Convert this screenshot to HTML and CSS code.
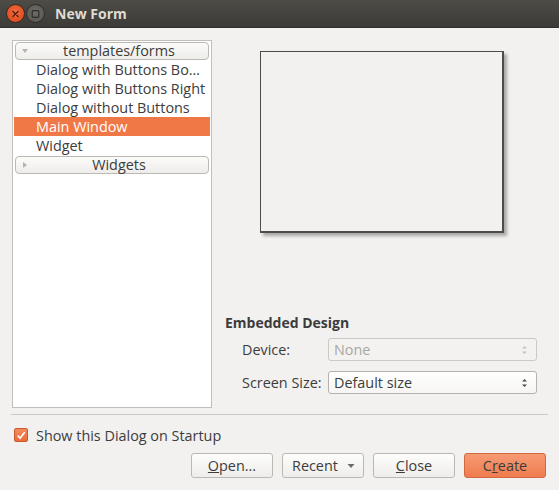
FILE: index.html
```html
<!DOCTYPE html>
<html>
<head>
<meta charset="utf-8">
<link rel="stylesheet" href="styles.css">
</head>
<body>
<div class="window">
  <div class="titlebar">
    <span class="tb-btn tb-close"><svg width="18" height="18" viewBox="0 0 18 18"><path d="M6.2 6.2 L11.8 11.8 M11.8 6.2 L6.2 11.8" stroke="#3a1a10" stroke-width="1.3" stroke-linecap="round"/></svg></span>
    <span class="tb-btn tb-min"><svg width="18" height="18" viewBox="0 0 18 18"><rect x="5.5" y="5.5" width="7" height="7" rx="1" fill="none" stroke="#2e2e2c" stroke-width="1.3"/></svg></span>
    <span class="title">New Form</span>
  </div>
  <div class="main">
    <div class="tree">
      <div class="group"><span class="arrow"><svg width="8" height="8" viewBox="0 0 8 8"><path d="M1 2 L7 2 L4 6 Z" fill="#b5b3ae"/></svg></span><span class="gtext">templates/forms</span></div>
      <div class="item">Dialog with Buttons Bo…</div>
      <div class="item">Dialog with Buttons Right</div>
      <div class="item">Dialog without Buttons</div>
      <div class="item selected">Main Window</div>
      <div class="item">Widget</div>
      <div class="group"><span class="arrow"><svg width="8" height="8" viewBox="0 0 8 8"><path d="M2 1 L6 4 L2 7 Z" fill="#b5b3ae"/></svg></span><span class="gtext">Widgets</span></div>
    </div>
    <div class="right">
      <div class="preview-wrap"><div class="preview"></div></div>
      <div class="embedded">
        <div class="ed-title">Embedded Design</div>
        <div class="ed-grid">
          <span class="lbl">Device:</span>
          <div class="combo disabled"><span>None</span><span class="spin"><svg width="7" height="12" viewBox="0 0 7 12"><path d="M1 4.5 L3.5 2 L6 4.5 Z M1 7.5 L3.5 10 L6 7.5 Z" fill="#c4c2bd"/></svg></span></div>
          <span class="lbl">Screen Size:</span>
          <div class="combo"><span>Default size</span><span class="spin"><svg width="7" height="12" viewBox="0 0 7 12"><path d="M1 4.5 L3.5 2 L6 4.5 Z M1 7.5 L3.5 10 L6 7.5 Z" fill="#4c4c4c"/></svg></span></div>
        </div>
      </div>
    </div>
  </div>
  <div class="sep"></div>
  <label class="check-row"><span class="checkbox"><svg width="13" height="13" viewBox="0 0 13 13"><path d="M3 6.5 L5.5 9.5 L10.5 3" fill="none" stroke="#fff" stroke-width="1.8"/></svg></span><span>Show this Dialog on Startup</span></label>
  <div class="buttons">
    <button class="btn"><u>O</u>pen...</button>
    <button class="btn recent"><span>Recent</span><svg width="8" height="6" viewBox="0 0 8 6"><path d="M0.5 1 L7.5 1 L4 5 Z" fill="#6a6a6a"/></svg></button>
    <button class="btn"><u>C</u>lose</button>
    <button class="btn primary">C<u>r</u>eate</button>
  </div>
</div>
</body>
</html>
```
FILE: styles.css
```css
* { box-sizing: border-box; }
html, body { margin: 0; padding: 0; }
body {
  width: 559px; height: 490px; overflow: hidden;
  background: #f2f1f0;
  font-family: "Open Sans", "DejaVu Sans", sans-serif;
  font-size: 14.4px;
  color: #3c3c3c;
}
.window { width: 559px; height: 490px; display: flex; flex-direction: column; }
.titlebar {
  height: 28px; flex: none;
  background: linear-gradient(#4d4c47, #3c3b37);
  display: flex; align-items: center;
  padding-left: 6px; gap: 1px;
  border-bottom: 1px solid #2f2e2b;
}
.tb-btn { width: 19px; height: 19px; border-radius: 50%; display: flex; align-items: center; justify-content: center; }
.tb-close { background: radial-gradient(circle at 50% 40%, #f4683c, #d8451b); border: 1px solid #3a2a22; }
.tb-min { background: radial-gradient(circle at 50% 40%, #6d6c67, #55544f); border: 1px solid #2e2d2a; }
.title { margin-left: 9px; color: #dfdbd2; font-weight: bold; font-size: 14px; }
.main { display: flex; padding: 12px 0 0 12px; height: 380px; flex: none; }
.tree {
  width: 200px; height: 368px;
  background: #fff; border: 1px solid #c2bfba;
  padding: 1px 2px 0 1px;
}
.group {
  height: 18px; margin: 0 0 0 1px;
  border: 1px solid #bcb9b3; border-radius: 4px;
  background: linear-gradient(#fbfbfa, #eeedeb);
  display: flex; align-items: center; position: relative;
}
.group .arrow { position: absolute; left: 5px; top: 4px; line-height: 0; }
.group .gtext { flex: 1; text-align: center; line-height: 16px; padding-left: 14px; }
.group:last-child { margin-top: 1px; }
.item { height: 19px; line-height: 19px; padding-left: 22px; white-space: nowrap; overflow: hidden; }
.item.selected { background: #f07746; color: #fff; margin-right: -1px; }
.right { flex: 1; display: flex; flex-direction: column; }
.preview-wrap { padding: 11px 0 0 48px; height: 273px; }
.preview {
  width: 244px; height: 182px;
  border: 2px solid #4c4c4c; border-width: 1px 2px 2px 1px;
  background: #f2f1f0;
  box-shadow: 3px 3px 3px rgba(0,0,0,0.3);
}
.embedded { padding-left: 13px; }
.ed-title { font-weight: bold; font-size: 14px; height: 19px; line-height: 19px; margin-bottom: 6px; }
.ed-grid { display: grid; grid-template-columns: 86px 209px; row-gap: 10px; padding-left: 17px; align-items: center; }
.lbl { line-height: 23px; }
.combo {
  height: 23px; border: 1px solid #b5b2ad; border-radius: 3px;
  background: linear-gradient(#ffffff, #f6f5f4);
  display: flex; align-items: center; justify-content: space-between;
  padding: 0 8px 0 5px;
}
.combo.disabled { background: #f3f2f1; color: #a9a7a3; border-color: #ccc9c4; }
.spin { line-height: 0; }
.sep { height: 1px; background: #cdcac5; margin: 6px 11px 0 11px; flex: none; }
.check-row { display: flex; align-items: center; gap: 8px; padding-left: 14px; margin-top: 12px; height: 16px; }
.checkbox {
  width: 14px; height: 14px; border: 1px solid #c8592e; border-radius: 2px;
  background: linear-gradient(#f48a5e, #ec6c3a);
  display: flex; align-items: center; justify-content: center; line-height: 0;
}
.buttons { display: flex; justify-content: flex-end; gap: 9px; padding-right: 13px; margin-top: 10px; }
.btn {
  width: 82px; height: 25px;
  font-family: inherit; font-size: 14.4px; color: #3c3c3c;
  border: 1px solid #bbb8b2; border-radius: 3px;
  background: linear-gradient(#fdfdfc, #eeedeb);
  padding: 0;
}
.btn.recent { display: flex; align-items: center; justify-content: space-between; padding: 0 8px 0 9px; }
.btn.primary { background: linear-gradient(#f69a74, #ef7c4f); border-color: #d0693f; }
```
